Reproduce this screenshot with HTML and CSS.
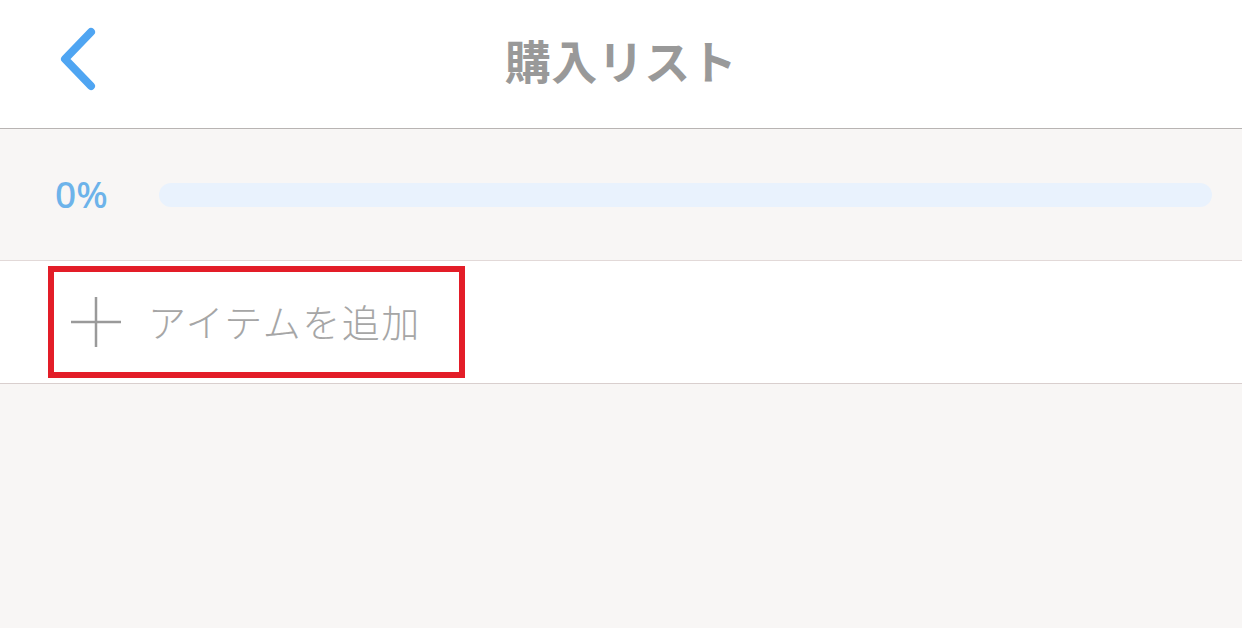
FILE: index.html
```html
<!DOCTYPE html>
<html lang="ja">

<head>
    <meta charset="UTF-8">
    <meta name="viewport" content="width=device-width, initial-scale=1.0">
    <link rel="stylesheet" href="styles.css">
    <title>購入リスト</title>
</head>

<body>
    <header class="nav-bar">
        <button class="back-button" aria-label="戻る">
            <svg width="40" height="66" viewBox="0 0 40 66">
                <path d="M34 5 L8 32 L34 59" fill="none" stroke="#4fa5f2" stroke-width="8" stroke-linecap="round" stroke-linejoin="round"/>
            </svg>
        </button>
        <h1 class="nav-title">購入リスト</h1>
    </header>

    <section class="progress">
        <span class="progress-label">0%</span>
        <div class="progress-track">
            <div class="progress-fill" style="width: 0%"></div>
        </div>
    </section>

    <div class="add-row">
        <button class="add-item">
            <svg class="add-icon" width="52" height="52" viewBox="0 0 52 52">
                <path d="M26 1 V51 M1 26 H51" stroke="#9a9a9a" stroke-width="2.5"/>
            </svg>
            <span>アイテムを追加</span>
        </button>
    </div>
</body>

</html>
```

FILE: styles.css
```css
* {
    box-sizing: border-box;
    margin: 0;
    padding: 0;
    font-family: "Noto Sans CJK JP", "Noto Sans", sans-serif;
}

body {
    width: 100vw;
    height: 100vh;
    overflow: hidden;
    background-color: #f8f6f5;
}

.nav-bar {
    position: relative;
    display: flex;
    align-items: center;
    justify-content: center;
    height: 129px;
    background-color: #fff;
    border-bottom: 1.5px solid #b8b4b3;
}

.back-button {
    position: absolute;
    left: 57px;
    top: 27px;
    display: flex;
    background: none;
    border: none;
}

.nav-title {
    font-size: 46px;
    font-weight: 700;
    color: #999;
    line-height: 1;
    margin-top: -10px;
    letter-spacing: 0.5px;
}

.progress {
    display: flex;
    align-items: center;
    height: 132px;
    padding: 0 30px 0 55px;
    border-bottom: 1px solid #e2d9d8;
}

.progress-label {
    width: 104px;
    font-family: "Noto Sans", sans-serif;
    font-size: 37px;
    font-weight: 500;
    color: #6db3ea;
    margin-top: -2px;
}

.progress-track {
    flex: 1;
    height: 24px;
    border-radius: 12px;
    background-color: #e9f2fd;
    overflow: hidden;
}

.progress-fill {
    height: 100%;
    background-color: #4fa5f2;
}

.add-row {
    display: flex;
    align-items: center;
    height: 123px;
    padding-left: 48px;
    background-color: #fff;
    border-bottom: 1px solid #d9cfce;
}

.add-item {
    display: flex;
    align-items: center;
    gap: 26px;
    width: 417px;
    height: 112px;
    padding-left: 16px;
    background: #fff;
    border: 6px solid #e31d28;
    cursor: pointer;
}

.add-item span {
    font-size: 38px;
    font-weight: 300;
    color: #a6a6a6;
    letter-spacing: 1.5px;
    margin-top: -4px;
}
```
